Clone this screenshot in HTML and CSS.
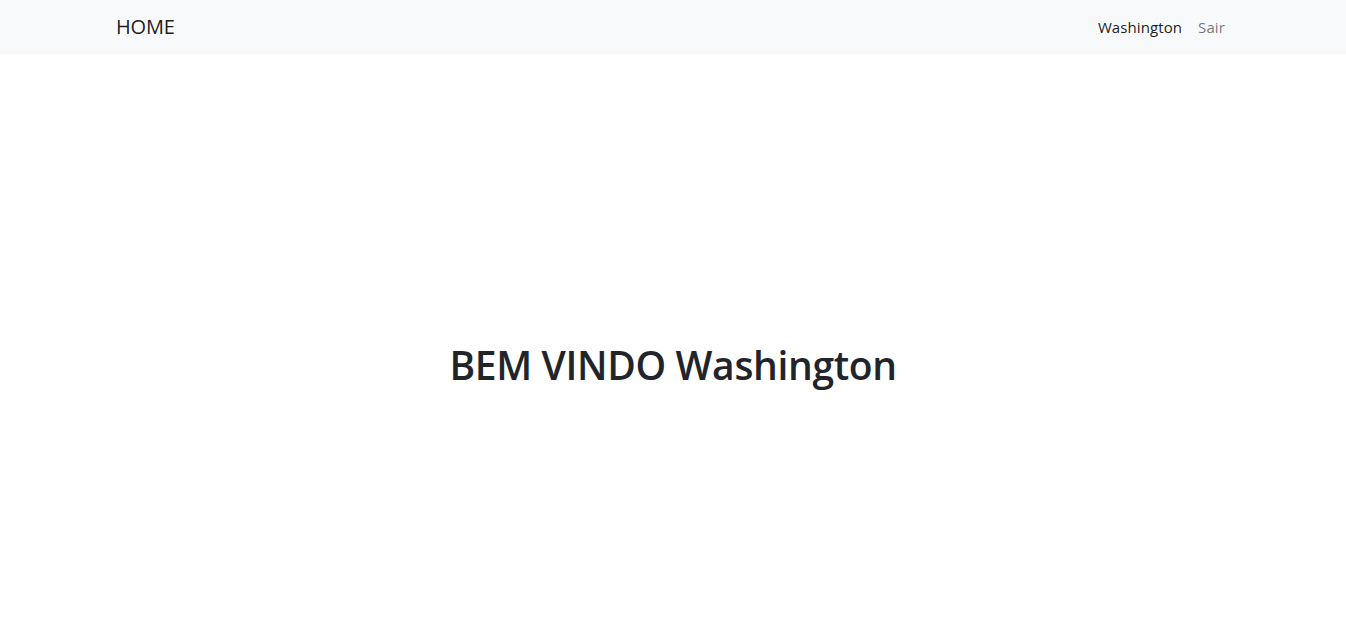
FILE: index.html
```html
<!DOCTYPE html>
<html lang="pt-br">
<head>
<meta charset="utf-8">
<title>Home</title>
<link rel="stylesheet" href="styles.css">
</head>
<body>
<nav class="navbar">
  <div class="container nav-inner">
    <a class="brand" href="#">HOME</a>
    <ul class="nav-links">
      <li><a class="nav-link active" href="#">Washington</a></li>
      <li><a class="nav-link" href="#">Sair</a></li>
    </ul>
  </div>
</nav>
<main class="main">
  <h1 class="welcome">BEM VINDO Washington</h1>
</main>
</body>
</html>
```
FILE: styles.css
```css
* { box-sizing: border-box; }
html, body { margin: 0; padding: 0; }
body {
  font-family: "Open Sans", "Noto Sans", "Liberation Sans", sans-serif;
  font-size: 16px;
  line-height: 1.5;
  color: #212529;
  background: #fff;
}
.navbar {
  background: #f8f9fa;
  height: 54px;
  display: flex;
  align-items: center;
}
.container {
  width: 100%;
  max-width: 1140px;
  margin: 0 auto;
  padding: 0 10px 0 12px;
}
.nav-inner {
  display: flex;
  align-items: center;
  justify-content: space-between;
}
.brand {
  font-size: 20px;
  margin-left: 1px;
  color: rgba(0,0,0,.9);
  text-decoration: none;
  letter-spacing: -0.2px;
}
.nav-links {
  list-style: none;
  margin: 0;
  padding: 0;
  display: flex;
}
.nav-link {
  display: block;
  padding: 8px 8px;
  font-size: 15px;
  letter-spacing: 0.1px;
  color: rgba(0,0,0,.55);
  text-decoration: none;
}
.nav-link.active { color: rgba(0,0,0,.9); }
.main {
  height: 100vh;
  display: flex;
  align-items: center;
  justify-content: center;
}
.welcome {
  margin: 0;
  font-size: 39px;
  font-weight: 600;
  line-height: 1.2;
  letter-spacing: -0.35px;
}
```
